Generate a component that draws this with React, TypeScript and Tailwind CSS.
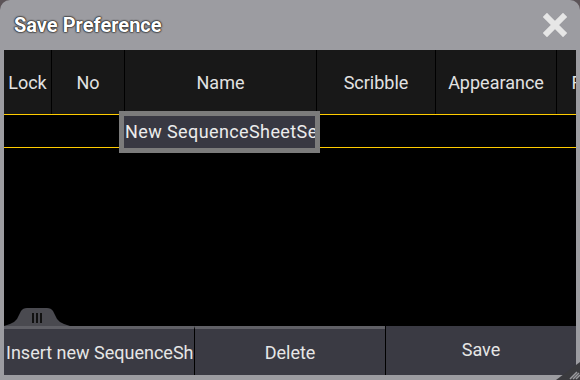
const columns = [
  { label: "Lock", w: "w-[47px]" },
  { label: "No", w: "w-[73px]" },
  { label: "Name", w: "w-[192px]" },
  { label: "Scribble", w: "w-[119px]" },
  { label: "Appearance", w: "w-[121px]" },
  { label: "F", w: "w-[40px]" },
];

const CloseIcon = () => (
  <svg width="24" height="24" viewBox="0 0 24 24">
    <path d="M4 4 L20 20 M20 4 L4 20" stroke="#e6e6e6" strokeWidth="6" strokeLinecap="square" />
  </svg>
);

const App = () => {
  return (
    <div className="w-[580px] h-[380px] bg-[#5c5458] overflow-hidden font-['Roboto',sans-serif]">
      <div className="relative flex flex-col w-full h-full bg-[#9c9ca1] rounded-t-[10px]">
        {/* title bar */}
        <div className="flex items-center justify-between h-[50px] pl-[14px] pr-[13px]">
          <span className="text-[20px] font-bold text-white [text-shadow:0_0_2px_#222,0_0_2px_#222,0_0_1px_#222,0_0_1px_#222]">
            Save Preference
          </span>
          <CloseIcon />
        </div>

        <div className="flex flex-col flex-1 px-[4px] pb-[5px]">
          {/* table */}
          <div className="relative flex flex-col flex-1 bg-black overflow-hidden">
            <div className="flex h-[65px] bg-[#181818] border-b border-[#ffcc00]">
              {columns.map((c, i) => (
                <div
                  key={c.label}
                  className={`${c.w} shrink-0 flex items-center justify-center text-[18px] text-[#e2e2e2] ${i > 0 ? "border-l border-black" : ""}`}
                >
                  {c.label}
                </div>
              ))}
            </div>
            <div className="h-[33px] border-b border-[#ffcc00]" />
            <div className="flex-1" />

            {/* edit field over the Name cell */}
            <div className="absolute left-[115px] top-[61px] w-[201px] h-[42px] border-[5px] border-[#7b7b7b] bg-[#383842] overflow-hidden">
              <div className="pl-[1px] leading-[32px] text-[18px] tracking-[0.4px] text-[#ececec] whitespace-nowrap">
                New SequenceSheetSet
              </div>
            </div>

            {/* drag handle */}
            <div className="absolute left-0 bottom-0 w-[66px] h-[18px]">
              <svg width="66" height="18" viewBox="0 0 66 18">
                <path d="M0 18 L6 16 Q10 15 13 11 L17 3 Q19 0 23 0 L43 0 Q47 0 49 3 L53 11 Q56 15 60 16 L66 18 Z" fill="#4a4a50" />
                <rect x="28" y="5" width="2" height="10" fill="#111" />
                <rect x="32" y="5" width="2" height="10" fill="#111" />
                <rect x="36" y="5" width="2" height="10" fill="#111" />
              </svg>
            </div>
          </div>

          {/* buttons */}
          <div className="flex h-[49px] bg-[#3a3a43] text-[18px] text-[#e6e6e6]">
            <div className="w-[190px] shrink-0 border-t-[3px] border-[#606066] overflow-hidden whitespace-nowrap pl-[2px] flex items-center rounded-bl-[5px]">
              Insert new SequenceSheetSet
            </div>
            <div className="w-[191px] shrink-0 border-t-[3px] border-[#606066] border-l border-l-black flex items-center justify-center">
              Delete
            </div>
            <div className="flex-1 border-l border-black flex items-center justify-center pb-[2px]">
              Save
            </div>
          </div>
        </div>

        {/* resize grip */}
        <div className="absolute right-0 bottom-0">
          <svg width="24" height="18" viewBox="0 0 24 18">
            <path d="M24 0 L24 18 L0 18 Z" fill="#3a3a3e" />
            <path d="M14 17 L21 10 M17 17 L23 11 M20 17 L24 13" stroke="#9a9a9e" strokeWidth="1.5" />
          </svg>
        </div>
      </div>
    </div>
  );
};

export default App;
